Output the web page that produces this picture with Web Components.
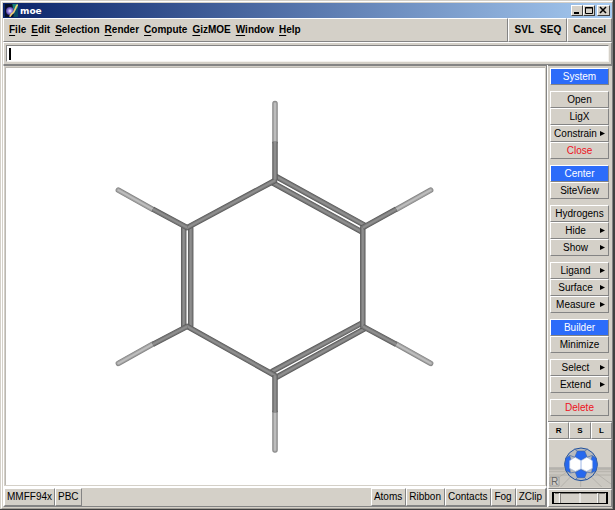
<!DOCTYPE html>
<html lang="en">
<head>
<meta charset="utf-8">
<title>moe</title>
<style>
html, body { margin: 0; height: 100%; }
body { background: #d4d0c8; font: 10px/12px "Liberation Sans", Arial, sans-serif; color: #000; overflow: hidden; }
</style>
</head>
<body>
<moe-window>
  <moe-titlebar slot="title">moe</moe-titlebar>
  <moe-menubar slot="menu">
    <moe-menu>File</moe-menu><moe-menu>Edit</moe-menu><moe-menu>Selection</moe-menu><moe-menu>Render</moe-menu><moe-menu>Compute</moe-menu><moe-menu>GizMOE</moe-menu><moe-menu>Window</moe-menu><moe-menu>Help</moe-menu>
    <moe-menu slot="editors" plain>SVL</moe-menu><moe-menu slot="editors" plain>SEQ</moe-menu>
    <moe-menu slot="cancel" plain>Cancel</moe-menu>
  </moe-menubar>
  <moe-command slot="command"></moe-command>
  <moe-viewport slot="view"></moe-viewport>
  <moe-status slot="status">
    <moe-status-button>MMFF94x</moe-status-button><moe-status-button>PBC</moe-status-button>
    <moe-status-button slot="end">Atoms</moe-status-button><moe-status-button slot="end">Ribbon</moe-status-button><moe-status-button slot="end">Contacts</moe-status-button><moe-status-button slot="end">Fog</moe-status-button><moe-status-button slot="end">ZClip</moe-status-button>
  </moe-status>
  <moe-side slot="side">
    <moe-group><moe-action kind="primary">System</moe-action></moe-group>
    <moe-group><moe-action>Open</moe-action><moe-action>LigX</moe-action><moe-action more>Constrain</moe-action><moe-action kind="danger">Close</moe-action></moe-group>
    <moe-group><moe-action kind="primary">Center</moe-action><moe-action>SiteView</moe-action></moe-group>
    <moe-group><moe-action>Hydrogens</moe-action><moe-action more>Hide</moe-action><moe-action more>Show</moe-action></moe-group>
    <moe-group><moe-action more>Ligand</moe-action><moe-action more>Surface</moe-action><moe-action more>Measure</moe-action></moe-group>
    <moe-group><moe-action kind="primary">Builder</moe-action><moe-action>Minimize</moe-action></moe-group>
    <moe-group><moe-action more>Select</moe-action><moe-action more>Extend</moe-action></moe-group>
    <moe-group><moe-action kind="danger">Delete</moe-action></moe-group>
    <moe-navigator slot="nav"></moe-navigator>
  </moe-side>
</moe-window>
<script>
const RESET = `
  *, *::before { box-sizing: border-box; }
  button { font: inherit; color: inherit; background: none; border: 0; padding: 0; margin: 0; white-space: nowrap; }
  svg { display: block; }
`;

function define(name, html, setup) {
  const template = document.createElement('template');
  template.innerHTML = html;
  customElements.define(name, class extends HTMLElement {
    constructor() {
      super();
      const root = this.attachShadow({ mode: 'open' });
      const style = document.createElement('style');
      style.textContent = RESET;
      root.append(style, template.content.cloneNode(true));
      if (setup) setup(this, root);
    }
  });
}

define('moe-window', `
  <style>
    :host { display: flex; flex-direction: column; box-sizing: border-box; height: 100vh; padding: 1px 0 0 1px;
      background: #d4d0c8; border-right: 2px solid #404040; border-bottom: 1px solid #404040; }
    .frame { flex: 1; min-height: 0; display: flex; flex-direction: column; padding: 1px 0 1px 1px;
      border: 1px solid; border-color: #fff #808080 #a09c96 #fff; }
    .body { flex: 1; min-height: 0; display: grid; grid-template-columns: minmax(0, 1fr) 65px; }
    .left { display: flex; flex-direction: column; min-height: 0; }
    slot[name=view]::slotted(*) { flex: 1; }
  </style>
  <div class="frame">
    <slot name="title"></slot>
    <slot name="menu"></slot>
    <slot name="command"></slot>
    <div class="body">
      <div class="left"><slot name="view"></slot><slot name="status"></slot></div>
      <slot name="side"></slot>
    </div>
  </div>`);

define('moe-titlebar', `
  <style>
    :host { display: flex; align-items: center; height: 15px; padding: 0 2px; box-sizing: border-box;
      background: linear-gradient(90deg, #0a246a, #a6caf0); color: #fff; font: bold 9px/12px "DejaVu Sans", sans-serif; }
    .name { flex: 1; padding-left: 2px; }
    .controls { display: flex; }
    button { width: 12px; height: 11px; background: #d4d0c8; border: 1px solid; border-color: #fff #404040 #404040 #fff; }
    button:last-child { width: 13px; margin-left: 2px; }
  </style>
  <svg width="13" height="13" viewBox="0 0 39 39" aria-hidden="true">
    <defs><radialGradient id="ball"><stop offset="0" stop-color="#fff"/><stop offset=".35" stop-color="#b5a2ef"/><stop offset="1" stop-color="#4c3aa0"/></radialGradient></defs>
    <path fill="#071026" d="M0 0h39v39H0z"/>
    <path fill="#178078" d="M22 0h17v12L27 32z"/>
    <path fill="#0b4b67" d="M27 24l12-13v28H25z"/>
    <circle cx="15" cy="21" r="12" fill="url(#ball)"/>
    <path fill="none" stroke="#efd076" stroke-width="5" d="M38 2C29 10 32 24 20 30l-6 8"/>
  </svg>
  <span class="name"><slot></slot></span>
  <div class="controls">
    <button type="button" aria-label="Minimize window"><svg width="10" height="9"><path d="M2 7h5" stroke="#000" stroke-width="2"/></svg></button>
    <button type="button" aria-label="Maximize window"><svg width="10" height="9" fill="none" stroke="#000"><path d="M1.500 1.500h7v6h-7zM1 2h8"/></svg></button>
    <button type="button" aria-label="Close window"><svg width="11" height="9" fill="none" stroke="#000" stroke-width="1.500"><path d="M2 1l6 6M8 1L2 7"/></svg></button>
  </div>`);

define('moe-menubar', `
  <style>
    :host { display: flex; height: 24px; box-sizing: border-box; font-weight: bold; }
    nav, div { display: flex; align-items: center; border: 1px solid; border-color: #fff #848484 #848484 #fff; }
    nav { flex: 1; gap: 5px; padding: 0 5px; }
    .editors { gap: 6px; padding: 0 5px 0 6px; }
    .cancel { padding: 0 5px; }
  </style>
  <nav><slot></slot></nav>
  <div class="editors"><slot name="editors"></slot></div>
  <div class="cancel"><slot name="cancel"></slot></div>`);

define('moe-menu', `
  <style>
    :host { display: block; }
    button { display: block; }
    button::first-letter { text-decoration: underline; text-underline-offset: 2px; }
    :host([plain]) button::first-letter { text-decoration: none; }
  </style>
  <button type="button"><slot></slot></button>`);

define('moe-command', `
  <style>
    :host { display: flex; height: 23px; box-sizing: border-box; padding: 2px;
      border: 1px solid; border-color: #fff #848484 #848484 #fff; }
    .field { flex: 1; display: flex; align-items: center; background: #fff; padding-left: 2px;
      border: 1px solid; border-color: #848484 #f4f2ee #f4f2ee #848484; }
    .caret { width: 2px; height: 12px; background: #000; }
    input { flex: 1; min-width: 0; border: 0; outline: 0; padding: 0; font: inherit; background: none; }
  </style>
  <div class="field"><span class="caret"></span><input type="text" aria-label="Command"></div>`);

define('moe-viewport', `
  <style>
    :host { display: block; min-height: 0; box-sizing: border-box; padding: 1px; border: 1px solid; border-color: #848484 #848484 #fff #fff; }
    svg { width: 100%; height: 100%; background: #fff; border-left: 1px solid #bbb8b2; border-top: 1px solid #bbb8b2; }
    g { fill: none; stroke-linecap: round; }
    .bonds { stroke-linecap: butt; }
  </style>
  <svg viewBox="6 67 540 418" role="img" aria-label="Benzene molecule"></svg>`,
  (host, root) => {
    const svg = root.querySelector('svg');
    const shades = {
      carbon: [['#5c5c5c', 5.5], ['#777', 4], ['#8e8e8e', 2]],
      hydrogen: [['#858585', 5.5], ['#a0a0a0', 4], ['#bdbdbd', 2]]
    };
    const tube = (kind, d, cls = '') => `<g class="${cls}">` + shades[kind].map(([c, w]) =>
      `<path d="${d}" stroke="${c}" stroke-width="${w}"/>`).join('') + '</g>';
    svg.innerHTML = [
      tube('hydrogen', 'M275.500 102.500V141M118.500 189.500l34 19M431.500 189.500l-34 19M431.500 363l-34-19M118.500 363l34-19M275.500 450v-38'),
      tube('carbon', 'M184 228V325M191 228V325M277 176L366 225M273 182L362 231M273 371L362 323M277 377L366 328'),
      tube('carbon', 'M187.500 227L275 180M363.500 227V326M187.500 326L275 375'),
      tube('carbon', 'M275.500 179V141M187.500 227L153 208.500M363.500 227L397 208.500M363.500 326L397 344M187.500 326L153 344M275.500 375V412', 'bonds')
    ].join('');
  });

define('moe-status', `
  <style>
    :host { display: flex; justify-content: space-between; height: 20px; box-sizing: border-box;
      border: 1px solid; border-color: #fff #848484 #848484 #fff; }
    div { display: flex; }
  </style>
  <div><slot></slot></div><div><slot name="end"></slot></div>`);

define('moe-status-button', `
  <style>
    :host { display: flex; }
    button { padding: 0 2px; border: 1px solid; border-color: #fff #848484 #848484 #fff; }
    :host([slot=end]) button { padding: 0 3px 0 2px; }
  </style>
  <button type="button"><slot></slot></button>`);

define('moe-side', `
  <style>
    :host { display: flex; flex-direction: column; border-left: 1px solid #fff; }
    .panel { flex: 1; min-height: 0; display: flex; flex-direction: column; gap: 6px; padding: 2px 3px 0 2px;
      border: solid #848484; border-width: 1px 0 1px 0; }
  </style>
  <div class="panel"><slot></slot></div>
  <slot name="nav"></slot>`);

define('moe-group', `
  <style>:host { display: flex; flex-direction: column; }</style>
  <slot></slot>`);

define('moe-action', `
  <style>
    :host { display: block; }
    button { display: grid; grid-template-columns: 1fr; align-items: center; width: 100%; height: 17px;
      border: 1px solid; border-color: #fff #848484 #848484 #fff; }
    .label { text-align: center; }
    .arrow { display: none; }
    :host([more]) button { grid-template-columns: 1fr 8px; }
    :host([more]) .arrow { display: block; }
    :host([kind=primary]) button { background: #2c6cfa; color: #fff; }
    :host([kind=danger]) button { color: #ee1122; }
  </style>
  <button type="button"><span class="label"><slot></slot></span><svg class="arrow" width="5" height="5" viewBox="0 0 5 5" aria-hidden="true"><path d="M0 0l5 2.500L0 5z"/></svg></button>`);

define('moe-navigator', `
  <style>
    :host { display: block; }
    .keys { display: grid; grid-template-columns: repeat(3, 1fr); height: 17px; font: bold 8px/10px "Liberation Sans", sans-serif; }
    .keys button, .view, .dial { border: 1px solid; border-color: #fff #848484 #848484 #fff; }
    .view { padding: 1px 0; }
    .view svg { width: 100%; height: 46px; }
    .dial { height: 18px; padding: 1px 3px; }
    .dial svg { width: 100%; height: 14px; }
  </style>
  <div class="keys"><button type="button">R</button><button type="button">S</button><button type="button">L</button></div>
  <div class="view">
    <svg viewBox="6 17 186 138" preserveAspectRatio="xMidYMid slice" role="img" aria-label="Orientation ball">
      <path fill="#cbc8c1" d="M6 97h186v60H6z"/>
      <g stroke="#aaa8a2" stroke-width="2" fill="none">
        <path stroke="#898989" d="M6 98h186"/><path d="M6 103h186M6 109h186M6 119h186M101 130v27M75 120l-36 37M128 120l38 37M140 108l52 38M63 108L6 145"/>
      </g>
      <circle cx="102" cy="87" r="49" fill="#b9bbbd" stroke="#1d4f9e" stroke-width="3"/>
      <g stroke="#3c64a8" stroke-width="2" stroke-linejoin="round">
        <path fill="#2668ee" d="M91 47h22l7 17-18 12-18-12zM102 102l17 9-6 16H91l-6-16z"/>
        <path fill="#2668ee" d="M68 61l4 15-4 23 2 13-13-6-4-18 4-20zM136 61l-4 15 4 23-2 13 13-6 4-18-4-20z"/>
        <path fill="#fff" stroke="#a9c0ea" d="M84 66l18 10v24l-17 8-17-9V76zM120 66l-18 10v24l17 8 17-9V76z"/>
        <path fill="none" d="M91 47l-9-6M113 47l9-6M84 66l-16-6M120 66l16-6M85 110l-15 3M119 110l15 3M91 127l-6 6M113 127l6 6"/>
      </g>
      <path fill="#d0cdc6" stroke="#8b8b8b" stroke-width="2" d="M9 125h27v27H9z"/>
      <text x="12" y="149" font-size="30" fill="#666">R</text>
    </svg>
  </div>
  <div class="dial">
    <svg viewBox="0 0 57 14" preserveAspectRatio="none" role="img" aria-label="Zoom dial">
      <path fill="#d4d0c8" stroke="#000" stroke-width="1" d="M.500 1.500h56v11H.500z"/>
      <path stroke="#000" stroke-width="2" d="M1 1v12M56 1v12"/>
      <path stroke="#77746f" d="M8.500 2v10M47.500 2v10M3 2.500h51"/><path stroke="#fff" d="M28.500 2v10M7.500 2v10M46.500 2v10"/>
    </svg>
  </div>`);
</script>
</body>
</html>
